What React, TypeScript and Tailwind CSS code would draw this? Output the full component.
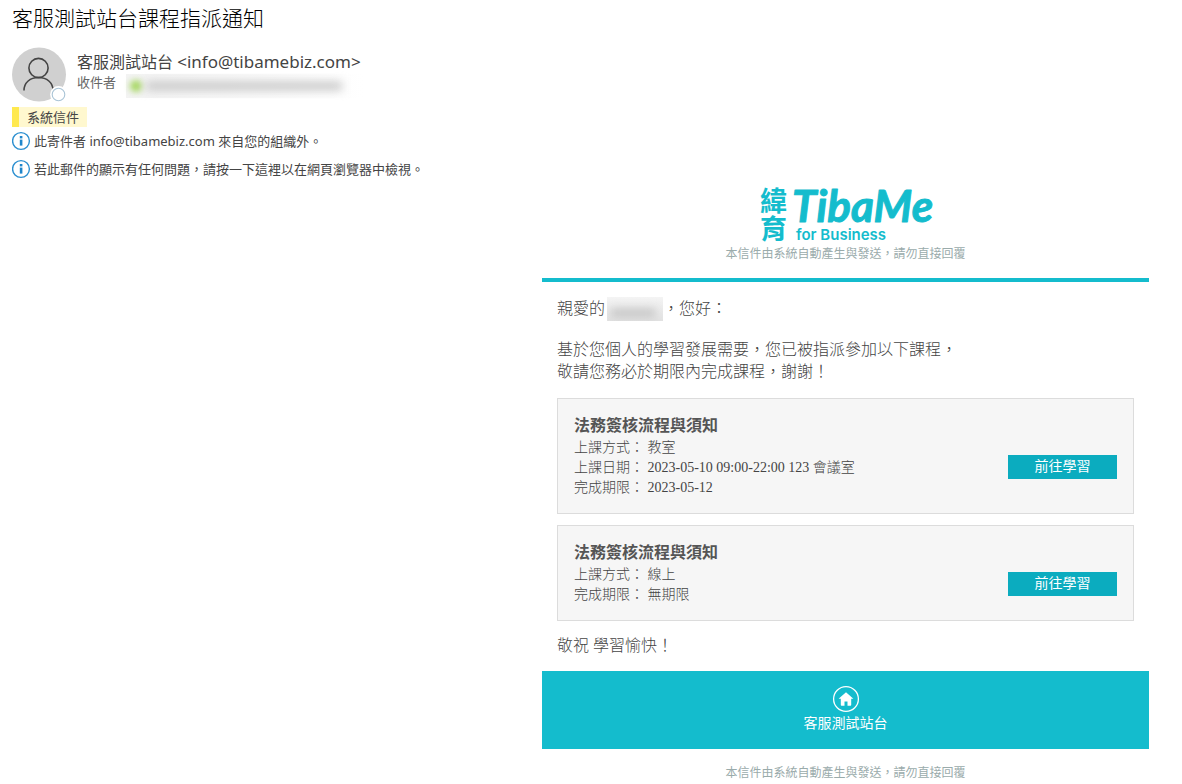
type Course = {
  id: number;
  title: string;
  details: { label: string; value: string }[];
};

const courses: Course[] = [
  {
    id: 1,
    title: "法務簽核流程與須知",
    details: [
      { label: "上課方式", value: "教室" },
      { label: "上課日期", value: "2023-05-10 09:00-22:00 123 會議室" },
      { label: "完成期限", value: "2023-05-12" },
    ],
  },
  {
    id: 2,
    title: "法務簽核流程與須知",
    details: [
      { label: "上課方式", value: "線上" },
      { label: "完成期限", value: "無期限" },
    ],
  },
];

const AUTO_NOTE = "本信件由系統自動產生與發送，請勿直接回覆";

function InfoIcon() {
  return (
    <svg viewBox="0 0 20 20" className="size-5 shrink-0" fill="none" aria-hidden="true">
      <circle cx="9" cy="10" r="8.4" stroke="#2b8fd0" strokeWidth="1.4" />
      <rect x="7.8" y="5" width="2.6" height="2.4" fill="#1f86cb" />
      <path d="M9.1 8.6v6" stroke="#1f86cb" strokeWidth="2.6" />
    </svg>
  );
}

function Avatar() {
  return (
    <svg viewBox="0 0 56 56" className="size-14 shrink-0" fill="none" aria-hidden="true">
      <circle cx="27" cy="27.5" r="27" fill="#d0d0d0" />
      <circle cx="26.5" cy="21" r="9.6" stroke="#444" strokeWidth="1.6" />
      <path d="M12 43.500c0-8 6.200-13 14.500-13S41 35.500 41 43.500" stroke="#444" strokeWidth="1.6" />
      <circle cx="46.5" cy="47.500" r="8.400" fill="#fff" />
      <circle cx="46.5" cy="47.500" r="6.300" fill="#fff" stroke="#a9c4d6" strokeWidth="1.100" />
    </svg>
  );
}

function HomeIcon() {
  return (
    <svg viewBox="0 0 28 28" className="size-7" fill="none" aria-hidden="true">
      <circle cx="14" cy="14" r="12.400" stroke="#fff" strokeWidth="1.300" />
      <path
        d="M14 7.200 6.600 13.800h2.200v6.200c0 .4.300.7.700.7h3v-4.200h3v4.200h3c.4 0 .7-.3.700-.7v-6.200h2.200L14 7.200Z"
        fill="#fff"
      />
    </svg>
  );
}

function Logo() {
  return (
    <svg
      viewBox="0 0 176 60"
      className="mx-auto h-[60px] w-44 overflow-visible"
      fill="#14bccd"
      role="img"
      aria-label="緯育 TibaMe for Business"
    >
      <g className="font-['Noto_Sans_CJK_TC',sans-serif] font-bold" fontSize="27">
        <text x="2" y="27">緯</text>
        <text x="2" y="55">育</text>
      </g>
      <text
        x="34"
        y="38"
        fontSize="44"
        stroke="#14bccd"
        strokeWidth="1"
        strokeLinejoin="round"
        className="font-[Lato,sans-serif] font-bold italic"
      >
        TibaMe
      </text>
      <text x="38" y="56" fontSize="15" className="font-[Inter,sans-serif] font-semibold">
        for Business
      </text>
    </svg>
  );
}

function CourseCard({ course }: { course: Course }) {
  return (
    <article className="flex items-center justify-between border border-[#dcdcdc] bg-[#f6f6f6] px-4 py-[15px]">
      <div className="text-[14px] leading-5 text-[#444]">
        <h2 className="text-[16px] font-bold leading-6 text-[#555]">{course.title}</h2>
        {course.details.map((detail) => (
          <p key={detail.label}>
            {detail.label}： {detail.value}
          </p>
        ))}
      </div>
      <a
        href="#course"
        className="mt-[21px] w-[109px] shrink-0 bg-[#0bacbf] text-center text-[14px] font-normal leading-6 text-white"
      >
        前往學習
      </a>
    </article>
  );
}

export default function App() {
  return (
    <div className="min-h-screen bg-white font-['Noto_Sans','Noto_Sans_CJK_TC',sans-serif] text-[#444]">
      <header className="px-3 pt-[3px]">
        <h1 className="font-['Noto_Sans_CJK_TC',sans-serif] text-[21px] font-light leading-7 text-black">
          客服測試站台課程指派通知
        </h1>

        <div className="mt-4 flex gap-[9px]">
          <Avatar />
          <div>
            <p className="pt-[3px] text-[16px] leading-6">
              客服測試站台 <span className="text-[17px]">&lt;info@tibamebiz.com&gt;</span>
            </p>
            <div className="flex items-start gap-[10px]">
              <span className="text-[13px] leading-4 text-[#666]">收件者</span>
              <div className="flex h-6 w-[238px] items-center gap-1 bg-linear-to-r from-[#f3f3f3] to-white pl-1">
                <span className="size-3 rounded-full bg-[#a4d65e] blur-[3px]" />
                <span className="h-2 w-[196px] bg-[#c4c4c4] blur-[5px]" />
              </div>
            </div>
          </div>
        </div>

        <span className="mt-1 inline-block border-l-[7px] border-[#ffe94f] bg-[#fff8cf] px-2 text-[13px] leading-5 align-top">
          系統信件
        </span>

        <div className="mt-1 flex items-center gap-[2px] text-[13px] leading-5">
          <InfoIcon />
          <p>此寄件者 info@tibamebiz.com 來自您的組織外。</p>
        </div>
        <div className="mt-2 flex items-center gap-[2px] text-[13px] leading-5">
          <InfoIcon />
          <p>若此郵件的顯示有任何問題，請按一下這裡以在網頁瀏覽器中檢視。</p>
        </div>
      </header>

      <main className="mt-[5px] mr-[33px] ml-auto w-full max-w-[607px] font-['Liberation_Serif','Noto_Sans_CJK_TC',serif] text-[#444]">
        <Logo />
        <p className="mt-[2px] text-center text-[12px] leading-4 text-[#9aabab]">{AUTO_NOTE}</p>

        <div className="mt-4 border-t-4 border-[#14bccd] px-[15px] text-[16px] font-light leading-[22px]">
          <div className="mt-[15px] flex items-center">
            <span>親愛的</span>
            <span className="ml-[2px] h-6 w-14 overflow-hidden bg-linear-to-b from-[#f4f4f4] to-[#e2e2e2]">
              <span className="mt-3 ml-1 block h-2 w-11 bg-[#c4c4c4] blur-[4px]" />
            </span>
            <span>，您好：</span>
          </div>
          <p className="mt-[18px]">
            基於您個人的學習發展需要，您已被指派參加以下課程，
            <br />
            敬請您務必於期限內完成課程，謝謝！
          </p>

          <section className="mt-[15px] flex flex-col gap-[11px]">
            {courses.map((course) => (
              <CourseCard key={course.id} course={course} />
            ))}
          </section>

          <p className="my-[14px]">敬祝 學習愉快！</p>
        </div>

        <footer>
          <a href="#home" className="flex flex-col items-center bg-[#14bccd] py-[14px] text-[14px] leading-[22px] text-white">
            <HomeIcon />
            客服測試站台
          </a>
          <p className="mt-4 text-center text-[12px] leading-4 text-[#9aabab]">{AUTO_NOTE}</p>
        </footer>
      </main>
    </div>
  );
}
